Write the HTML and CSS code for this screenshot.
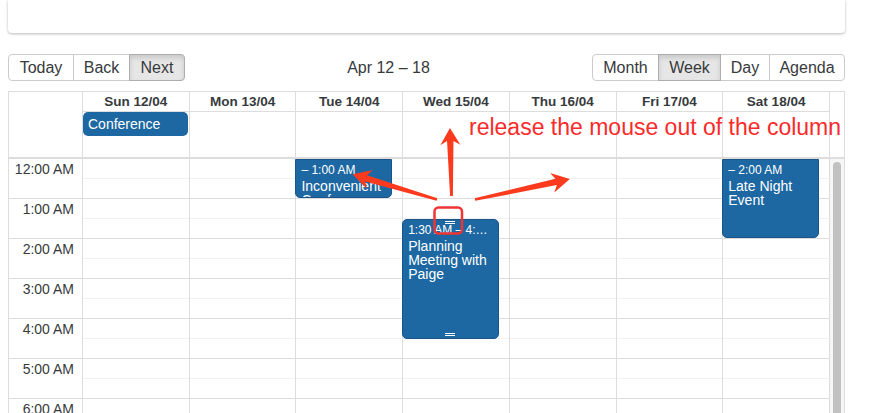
FILE: index.html
```html
<!DOCTYPE html>
<html lang="en">
<head>
<meta charset="utf-8">
<title>Week calendar</title>
<link rel="stylesheet" href="styles.css">
</head>
<body>
<div class="page">
  <div class="card"></div>

  <div class="toolbar">
    <div class="btn-group">
      <button class="btn w-today">Today</button>
      <button class="btn w-back">Back</button>
      <button class="btn w-next active">Next</button>
    </div>
    <div class="toolbar-label">Apr 12 – 18</div>
    <div class="btn-group">
      <button class="btn w-month">Month</button>
      <button class="btn w-week active">Week</button>
      <button class="btn w-day">Day</button>
      <button class="btn w-agenda">Agenda</button>
    </div>
  </div>

  <div class="calendar">
    <div class="head-grid">
      <div class="gutter-head"></div>
      <div class="day-head">Sun 12/04</div>
      <div class="day-head">Mon 13/04</div>
      <div class="day-head">Tue 14/04</div>
      <div class="day-head">Wed 15/04</div>
      <div class="day-head">Thu 16/04</div>
      <div class="day-head">Fri 17/04</div>
      <div class="day-head">Sat 18/04</div>
      <div class="spacer-head"></div>

      <div class="gutter-allday"></div>
      <div class="allday-cell"><div class="allday-event">Conference</div></div>
      <div class="allday-cell"></div>
      <div class="allday-cell"></div>
      <div class="allday-cell"></div>
      <div class="allday-cell"></div>
      <div class="allday-cell"></div>
      <div class="allday-cell"></div>
      <div class="spacer-allday"></div>
    </div>

    <div class="time-content">
      <div class="time-gutter">
        <div class="group"><div class="label">12:00 AM</div></div>
        <div class="group"><div class="label">1:00 AM</div></div>
        <div class="group"><div class="label">2:00 AM</div></div>
        <div class="group"><div class="label">3:00 AM</div></div>
        <div class="group"><div class="label">4:00 AM</div></div>
        <div class="group"><div class="label">5:00 AM</div></div>
        <div class="group"><div class="label">6:00 AM</div></div>
        <div class="group"><div class="label">7:00 AM</div></div>
      </div>

      <div class="day-col">
        <div class="group"><div class="slot"></div><div class="slot"></div></div>
        <div class="group"><div class="slot"></div><div class="slot"></div></div>
        <div class="group"><div class="slot"></div><div class="slot"></div></div>
        <div class="group"><div class="slot"></div><div class="slot"></div></div>
        <div class="group"><div class="slot"></div><div class="slot"></div></div>
        <div class="group"><div class="slot"></div><div class="slot"></div></div>
        <div class="group"><div class="slot"></div><div class="slot"></div></div>
        <div class="group"><div class="slot"></div><div class="slot"></div></div>
      </div>
      <div class="day-col">
        <div class="group"><div class="slot"></div><div class="slot"></div></div>
        <div class="group"><div class="slot"></div><div class="slot"></div></div>
        <div class="group"><div class="slot"></div><div class="slot"></div></div>
        <div class="group"><div class="slot"></div><div class="slot"></div></div>
        <div class="group"><div class="slot"></div><div class="slot"></div></div>
        <div class="group"><div class="slot"></div><div class="slot"></div></div>
        <div class="group"><div class="slot"></div><div class="slot"></div></div>
        <div class="group"><div class="slot"></div><div class="slot"></div></div>
      </div>
      <div class="day-col">
        <div class="group"><div class="slot"></div><div class="slot"></div></div>
        <div class="group"><div class="slot"></div><div class="slot"></div></div>
        <div class="group"><div class="slot"></div><div class="slot"></div></div>
        <div class="group"><div class="slot"></div><div class="slot"></div></div>
        <div class="group"><div class="slot"></div><div class="slot"></div></div>
        <div class="group"><div class="slot"></div><div class="slot"></div></div>
        <div class="group"><div class="slot"></div><div class="slot"></div></div>
        <div class="group"><div class="slot"></div><div class="slot"></div></div>
        <div class="event continues" style="top:0px;height:39px">
          <div class="event-label">– 1:00 AM</div>
          <div class="event-title">Inconvenient Conference Call</div>
        </div>
      </div>
      <div class="day-col">
        <div class="group"><div class="slot"></div><div class="slot"></div></div>
        <div class="group"><div class="slot"></div><div class="slot"></div></div>
        <div class="group"><div class="slot"></div><div class="slot"></div></div>
        <div class="group"><div class="slot"></div><div class="slot"></div></div>
        <div class="group"><div class="slot"></div><div class="slot"></div></div>
        <div class="group"><div class="slot"></div><div class="slot"></div></div>
        <div class="group"><div class="slot"></div><div class="slot"></div></div>
        <div class="group"><div class="slot"></div><div class="slot"></div></div>
        <div class="event" style="top:60px;height:120px">
          <div class="event-label">1:30 AM – 4:30 AM</div>
          <div class="event-title">Planning Meeting with Paige</div>
          <div class="resize-top"></div>
          <div class="resize-bottom"></div>
        </div>
      </div>
      <div class="day-col">
        <div class="group"><div class="slot"></div><div class="slot"></div></div>
        <div class="group"><div class="slot"></div><div class="slot"></div></div>
        <div class="group"><div class="slot"></div><div class="slot"></div></div>
        <div class="group"><div class="slot"></div><div class="slot"></div></div>
        <div class="group"><div class="slot"></div><div class="slot"></div></div>
        <div class="group"><div class="slot"></div><div class="slot"></div></div>
        <div class="group"><div class="slot"></div><div class="slot"></div></div>
        <div class="group"><div class="slot"></div><div class="slot"></div></div>
      </div>
      <div class="day-col">
        <div class="group"><div class="slot"></div><div class="slot"></div></div>
        <div class="group"><div class="slot"></div><div class="slot"></div></div>
        <div class="group"><div class="slot"></div><div class="slot"></div></div>
        <div class="group"><div class="slot"></div><div class="slot"></div></div>
        <div class="group"><div class="slot"></div><div class="slot"></div></div>
        <div class="group"><div class="slot"></div><div class="slot"></div></div>
        <div class="group"><div class="slot"></div><div class="slot"></div></div>
        <div class="group"><div class="slot"></div><div class="slot"></div></div>
      </div>
      <div class="day-col">
        <div class="group"><div class="slot"></div><div class="slot"></div></div>
        <div class="group"><div class="slot"></div><div class="slot"></div></div>
        <div class="group"><div class="slot"></div><div class="slot"></div></div>
        <div class="group"><div class="slot"></div><div class="slot"></div></div>
        <div class="group"><div class="slot"></div><div class="slot"></div></div>
        <div class="group"><div class="slot"></div><div class="slot"></div></div>
        <div class="group"><div class="slot"></div><div class="slot"></div></div>
        <div class="group"><div class="slot"></div><div class="slot"></div></div>
        <div class="event continues" style="top:0px;height:79px">
          <div class="event-label">– 2:00 AM</div>
          <div class="event-title">Late Night Event</div>
        </div>
      </div>

      <div class="scrollbar"><div class="thumb"></div></div>
    </div>
  </div>
</div>

<div class="annotation">
  <div class="annotation-text">release the mouse out of the column</div>
  <svg class="annotation-svg" width="876" height="413" viewBox="0 0 876 413" xmlns="http://www.w3.org/2000/svg">
    <g fill="#fb3a1e">
      <polygon transform="translate(451.5 196) rotate(-91.3)" points="0,-1.4 55,-3.2 51,-10 68,0 51,10 55,3.2 0,1.4"/>
      <polygon transform="translate(437 199.5) rotate(-163.4)" points="0,-1.4 74,-3.2 70,-10 88,0 70,10 74,3.2 0,1.4"/>
      <polygon transform="translate(475 199.5) rotate(-12.2)" points="0,-1.4 83,-3.2 79,-10 97,0 79,10 83,3.2 0,1.4"/>
    </g>
    <rect x="434.5" y="207.5" width="27.5" height="26" rx="4" ry="4" fill="none" stroke="#f03434" stroke-width="2.5"/>
  </svg>
</div>
</body>
</html>
```

FILE: styles.css
```css
html, body {
  margin: 0;
  padding: 0;
  background: #ffffff;
}

body {
  position: relative;
  height: 413px;
  overflow: hidden;
  font-family: "Liberation Sans", Arial, sans-serif;
  color: #373a3c;
}

.page {
  width: 837px;
  margin-left: 8px;
}

.card {
  height: 33px;
  background: #ffffff;
  border-radius: 0 0 4px 4px;
  box-shadow: 0 1px 3px rgba(0, 0, 0, 0.28);
}

/* Toolbar */
.toolbar {
  display: flex;
  align-items: center;
  margin-top: 21px;
  margin-bottom: 10px;
  height: 27px;
}

.btn-group {
  display: flex;
}

.btn {
  box-sizing: border-box;
  height: 27px;
  padding: 0;
  margin: 0;
  border: 1px solid #cccccc;
  background: #ffffff;
  color: #373a3c;
  font-family: "Liberation Sans", Arial, sans-serif;
  font-size: 16px;
  text-align: center;
  border-radius: 0;
}

.btn + .btn {
  margin-left: -1px;
}

.btn:first-child {
  border-radius: 4px 0 0 4px;
}

.btn:last-child {
  border-radius: 0 4px 4px 0;
}

.btn.active {
  background: #e6e6e6;
  border-color: #adadad;
  box-shadow: inset 0 3px 5px rgba(0, 0, 0, 0.125);
  position: relative;
}

.w-today { width: 66px; }
.w-back { width: 57px; }
.w-next { width: 56px; }
.w-month { width: 67px; }
.w-week { width: 63px; }
.w-day { width: 50px; }
.w-agenda { width: 76px; }

.toolbar-label {
  flex: 1;
  text-align: center;
  font-size: 16px;
}

/* Calendar */
.calendar {
  border: 1px solid #dddddd;
  height: 330px;
  overflow: hidden;
}

.head-grid {
  display: grid;
  grid-template-columns: 73px repeat(7, 1fr) 15px;
  grid-template-rows: 20px 45px;
}

.day-head {
  box-sizing: border-box;
  border-left: 1px solid #dddddd;
  border-bottom: 1px solid #dddddd;
  font-size: 13.5px;
  font-weight: bold;
  text-align: center;
  line-height: 18px;
  padding-top: 1px;
}

.spacer-head,
.spacer-allday,
.allday-cell {
  border-left: 1px solid #dddddd;
}

.allday-cell {
  padding: 0 1px 0 0;
}

.allday-event {
  height: 24px;
  box-sizing: border-box;
  padding: 2px 5px;
  line-height: 20px;
  font-size: 14px;
  color: #ffffff;
  background: #1d68a2;
  border-radius: 5px;
}

.time-content {
  display: grid;
  grid-template-columns: 73px repeat(7, 1fr) 15px;
  border-top: 2px solid #dddddd;
}

.group {
  box-sizing: border-box;
  height: 40px;
  border-bottom: 1px solid #dddddd;
}

.label {
  height: 20px;
  line-height: 20px;
  text-align: right;
  padding-right: 8px;
  font-size: 14px;
}

.day-col {
  position: relative;
  border-left: 1px solid #dddddd;
}

.slot {
  height: 19px;
}

.slot + .slot {
  border-top: 1px solid #f2f2f2;
}

.event {
  position: absolute;
  left: -1px;
  right: 10px;
  box-sizing: border-box;
  display: flex;
  flex-direction: column;
  padding: 2px 5px;
  background: #1d68a2;
  border: 1px solid #1b5587;
  border-radius: 5px;
  color: #ffffff;
  overflow: hidden;
}

.event.continues {
  border-top-left-radius: 0;
  border-top-right-radius: 0;
}

.event-label {
  font-size: 12px;
  line-height: 16.8px;
  white-space: nowrap;
  overflow: hidden;
  text-overflow: ellipsis;
  flex: none;
}

.event-title {
  font-size: 14px;
  line-height: 14px;
}

.resize-top,
.resize-bottom {
  position: absolute;
  left: 50%;
  width: 10px;
  margin-left: -5px;
  height: 0;
  border-top: 3px double #ffffff;
}

.resize-top {
  top: 1px;
}

.resize-bottom {
  bottom: 2px;
}

.scrollbar {
  border-left: 1px solid #dddddd;
  background: #f6f6f6;
  padding: 3px 3px 0 3px;
}

.thumb {
  height: 400px;
  background: #c1c1c1;
  border-radius: 4px;
}

/* Annotation overlay */
.annotation {
  position: absolute;
  left: 0;
  top: 0;
  width: 876px;
  height: 413px;
  pointer-events: none;
}

.annotation-svg {
  position: absolute;
  left: 0;
  top: 0;
}

.annotation-text {
  position: absolute;
  left: 469px;
  top: 114px;
  font-family: "Liberation Sans", Arial, sans-serif;
  font-size: 23px;
  line-height: 26px;
  color: #fc2b2b;
  white-space: nowrap;
}
```
